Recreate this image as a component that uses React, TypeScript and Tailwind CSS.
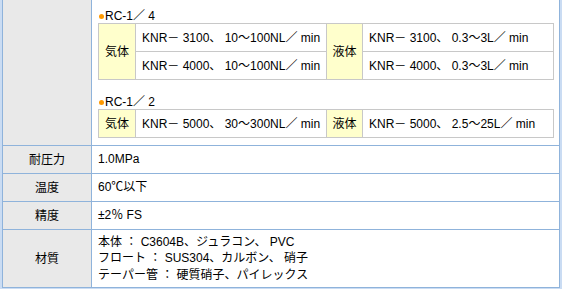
import React from 'react';

interface SubRow {
  gas: string;
  liquid: string;
}

interface Group {
  title: string;
  rows: SubRow[];
}

const groups: Group[] = [
  {
    title: 'RC-1／ 4',
    rows: [
      { gas: 'KNR－ 3100、 10～100NL／ min', liquid: 'KNR－ 3100、 0.3～3L／ min' },
      { gas: 'KNR－ 4000、 10～100NL／ min', liquid: 'KNR－ 4000、 0.3～3L／ min' },
    ],
  },
  {
    title: 'RC-1／ 2',
    rows: [{ gas: 'KNR－ 5000、 30～300NL／ min', liquid: 'KNR－ 5000、 2.5～25L／ min' }],
  },
];

const specs = [
  { label: '耐圧力', value: ['1.0MPa'] },
  { label: '温度', value: ['60℃以下'] },
  { label: '精度', value: ['±2％ FS'] },
  {
    label: '材質',
    value: [
      '本体 ： C3604B、ジュラコン、 PVC',
      'フロート ： SUS304、カルボン、 硝子',
      'テーパー管 ： 硬質硝子、パイレックス',
    ],
  },
];

const font = { fontFamily: '"Liberation Sans", "Noto Sans CJK JP", sans-serif' };

const cell = 'border-r border-b border-[#c8c8c8] flex items-center';

const FlowTable: React.FC<{ group: Group }> = ({ group }) => {
  const tall = group.rows.length > 1;
  return (
    <div>
      <div className="flex items-center h-[14px] pl-[1px]">
        <span className="w-[5px] h-[5px] rounded-full bg-[#ff9900] mr-[1px]" />
        <span>{group.title}</span>
      </div>
      <div className="grid grid-cols-[37px_191px_36px_191px] auto-rows-[28px] w-[456px] border-t border-l border-[#c8c8c8]">
        <div className={`${cell} ${tall ? 'row-span-2' : ''} bg-[#ffffcc] justify-center`}>気体</div>
        <div className={`${cell} pl-[6px] whitespace-nowrap`}>{group.rows[0].gas}</div>
        <div className={`${cell} ${tall ? 'row-span-2' : ''} bg-[#ffffcc] justify-center`}>液体</div>
        <div className={`${cell} pl-[6px] whitespace-nowrap`}>{group.rows[0].liquid}</div>
        {group.rows.slice(1).map((row, i) => (
          <React.Fragment key={i}>
            <div className={`${cell} col-start-2 pl-[6px] whitespace-nowrap`}>{row.gas}</div>
            <div className={`${cell} col-start-4 pl-[6px] whitespace-nowrap`}>{row.liquid}</div>
          </React.Fragment>
        ))}
      </div>
    </div>
  );
};

export default function App() {
  return (
    <div className="w-[562px] h-[289px] bg-[#cadcf3] pl-[2px] pr-[2px] text-[12px] text-black leading-none overflow-hidden" style={font}>
      <div className="border-l border-r border-b border-[#8fb3db] bg-white">
        {/* 流量レンジ */}
        <div className="flex h-[146px] border-b border-[#8fb3db]">
          <div className="w-[89px] shrink-0 bg-[#e9e9e9] border-r border-[#8fb3db]" />
          <div className="flex-1 pl-[6px] pt-[9px] flex flex-col gap-[15px]">
            {groups.map(g => (
              <FlowTable key={g.title} group={g} />
            ))}
          </div>
        </div>

        {/* 仕様 */}
        {specs.map((s, idx) => (
          <div
            key={s.label}
            className={`flex ${s.value.length > 1 ? 'h-[57px]' : 'h-[28px]'} ${idx < specs.length - 1 ? 'border-b border-[#8fb3db]' : ''}`}
          >
            <div className="w-[89px] shrink-0 bg-[#e9e9e9] border-r border-[#8fb3db] flex items-center justify-center">
              {s.label}
            </div>
            <div className="flex-1 pl-[6px] flex flex-col justify-center leading-[16.5px]">
              {s.value.map(v => (
                <div key={v}>{v}</div>
              ))}
            </div>
          </div>
        ))}
      </div>
    </div>
  );
}
